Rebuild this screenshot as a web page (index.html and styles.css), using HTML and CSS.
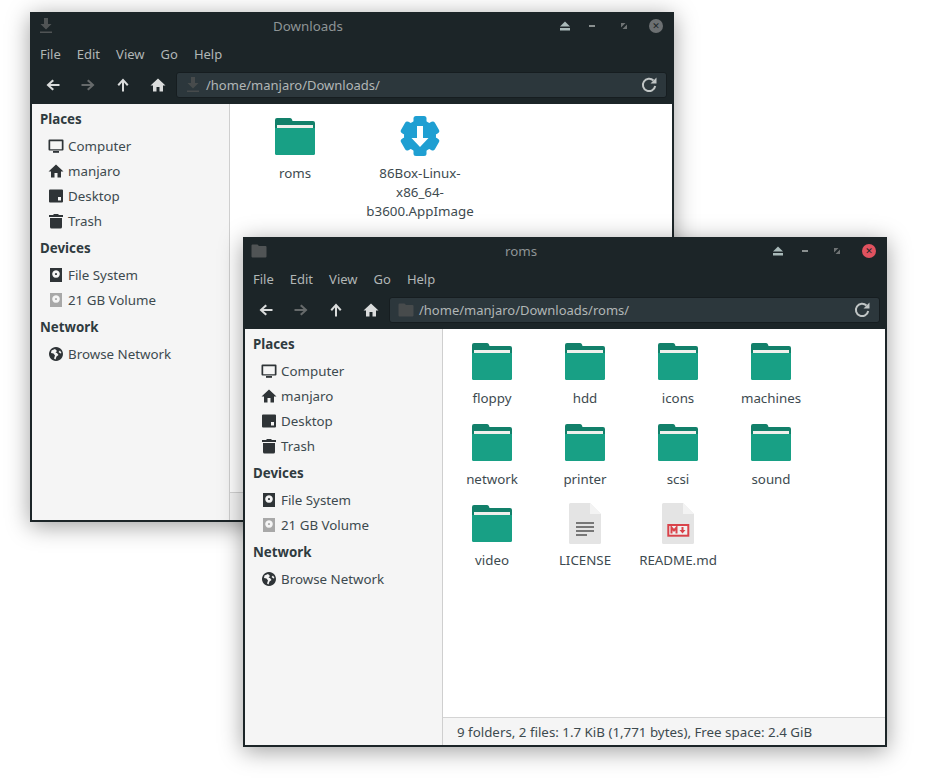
FILE: index.html
```html
<!DOCTYPE html>
<html lang="en">
<head>
<meta charset="utf-8">
<title>File manager windows</title>
<link rel="stylesheet" href="styles.css">
</head>
<body>
<svg class="defs" aria-hidden="true">
  <symbol id="i-download" viewBox="0 0 16 16"><path d="M6 0h4v6h3.500L8 11.500 2.500 6H6z"/><rect x="2" y="13.500" width="12" height="1.500"/></symbol>
  <symbol id="i-folder-small" viewBox="0 0 16 16"><path d="M1.500 1.500h5l1.500 1.500h6.500a1 1 0 0 1 1 1v9.500a1 1 0 0 1-1 1h-13a1 1 0 0 1-1-1v-11a1 1 0 0 1 1-1z"/></symbol>
  <symbol id="i-back" viewBox="0 0 16 16"><path d="M1.500 8 7.500 2.500 9 4 5.500 7H14.500V9H5.500L9 12 7.500 13.500z"/></symbol>
  <symbol id="i-forward" viewBox="0 0 16 16"><path d="M14.500 8 8.500 2.500 7 4 10.500 7H1.500V9H10.500L7 12 8.500 13.500z"/></symbol>
  <symbol id="i-up" viewBox="0 0 16 16"><path d="M8 1.500 13.500 7.500 12 9 9 5.500V14.500H7V5.500L4 9 2.500 7.500z"/></symbol>
  <symbol id="i-home" viewBox="0 0 16 16"><path d="M8 1.500 15.500 8.500H13V14.500H9.500V10H6.500V14.500H3V8.500H.5z"/></symbol>
  <symbol id="i-eject" viewBox="0 0 12 12"><path d="M6 1.500 11 6.500H1z"/><rect x="1" y="8" width="10" height="2.500"/></symbol>
  <symbol id="i-min" viewBox="0 0 12 12"><rect x="3" y="5" width="6" height="2"/></symbol>
  <symbol id="i-max" viewBox="0 0 12 12"><path d="M3 3h4.500L3 7.500zM9 9H4.500L9 4.500z"/></symbol>
  <symbol id="i-reload" viewBox="0 0 18 18"><path d="M13.500 4.500A6.200 6.200 0 1 0 15.200 10" fill="none" stroke="currentColor" stroke-width="2"/><path d="M10.500 7.500 16.500 1.500V7.500z"/></symbol>
  <symbol id="i-computer" viewBox="0 0 16 16"><path fill-rule="evenodd" d="M1.500 1.500h13a1 1 0 0 1 1 1v9a1 1 0 0 1-1 1h-13a1 1 0 0 1-1-1v-9a1 1 0 0 1 1-1zM2.200 3.200v8h11.600v-8z"/><rect x="5" y="13" width="6" height="1.800"/></symbol>
  <symbol id="i-desktop" viewBox="0 0 16 16"><path fill-rule="evenodd" d="M2 1.500h12a1 1 0 0 1 1 1v11a1 1 0 0 1-1 1H2a1 1 0 0 1-1-1v-11a1 1 0 0 1 1-1zM10 9v3.500h3V9z"/></symbol>
  <symbol id="i-trash" viewBox="0 0 16 16"><path d="M5.500 1h5v1H15v2H1V2h4.500zM2 5h12v9a1.500 1.500 0 0 1-1.500 1.500h-9A1.500 1.500 0 0 1 2 14z"/></symbol>
  <symbol id="i-disk" viewBox="0 0 16 16"><path fill-rule="evenodd" d="M2 1h12v14H2zM8 3.200a3.800 3.800 0 1 0 .01 0zM8 5.900a1.100 1.100 0 1 1-.01 0z"/></symbol>
  <symbol id="i-globe" viewBox="0 0 16 16"><path fill-rule="evenodd" d="M8 1a7 7 0 1 1-.01 0zM7 3 3.500 4.500 3 7l2.500.5L7 9.500 6 12.500l1.500 1 1-3 2-1.500L9 7 7.500 6.500 9 5zM12 4.500 10.500 6l2 1.500 1-.5z"/></symbol>
  <symbol id="i-folder" viewBox="0 0 40 40"><path fill="#12806a" d="M2 2h13a2 2 0 0 1 2 1.500l.5 1.500H38a2 2 0 0 1 2 2V20H0V4a2 2 0 0 1 2-2z"/><rect fill="#f0f0ec" x="2" y="9" width="36" height="4"/><path fill="#18a085" d="M0 12h40v25.500a1.500 1.500 0 0 1-1.500 1.500h-37A1.500 1.500 0 0 1 0 37.500z"/></symbol>
  <symbol id="i-appimage" viewBox="0 0 40 40">
    <g fill="#1f9fd2"><circle cx="20" cy="20" r="16"/><rect x="13.500" y="0" width="13" height="40" rx="2.500"/><rect x="13.500" y=".5" width="13" height="39" rx="2.500" transform="rotate(60 20 20)"/><rect x="13.500" y=".5" width="13" height="39" rx="2.500" transform="rotate(120 20 20)"/></g>
    <path fill="#fff" d="M17 10h6v12h5.500L20 31 11.500 22H17z"/>
  </symbol>
  <symbol id="i-doc" viewBox="0 0 32 41"><path fill="#e4e4e4" d="M1.500 0H21L32 11v28.500a1.500 1.500 0 0 1-1.500 1.500h-29A1.500 1.500 0 0 1 0 39.500v-38A1.500 1.500 0 0 1 1.500 0z"/><path fill="#f3f3f3" d="M21 0 32 11H21z"/></symbol>
  <symbol id="i-license" viewBox="0 0 32 41"><use href="#i-doc"/><g fill="#777"><rect x="7" y="19" width="18" height="2"/><rect x="7" y="23" width="18" height="2"/><rect x="7" y="27" width="18" height="2"/><rect x="7" y="31" width="11" height="2"/></g></symbol>
  <symbol id="i-markdown" viewBox="0 0 32 41"><use href="#i-doc"/><rect x="6.300" y="22" width="20" height="10.700" fill="#f0f0f0" stroke="#d9434a" stroke-width="2"/><path d="M9.500 30.500v-6l2.500 3 2.500-3v6" fill="none" stroke="#d9434a" stroke-width="2"/><path d="M19.500 24h2v3h2l-3 3.500-3-3.500h2z" fill="#d9434a"/></symbol>
</svg>

<section class="window window-back">
  <header class="titlebar">
    <div class="title-icon"><svg class="ico16 dim"><use href="#i-download"/></svg></div>
    <div class="title">Downloads</div>
    <div class="controls">
      <button class="ctl ctl-eject"><svg class="ico12"><use href="#i-eject"/></svg></button>
      <button class="ctl ctl-min"><svg class="ico12"><use href="#i-min"/></svg></button>
      <button class="ctl ctl-max"><svg class="ico12"><use href="#i-max"/></svg></button>
      <button class="ctl"><span class="close">&#x2715;</span></button>
    </div>
  </header>
  <nav class="menubar"><span class="menu">File</span><span class="menu">Edit</span><span class="menu">View</span><span class="menu">Go</span><span class="menu">Help</span></nav>
  <div class="toolbar">
    <button class="tool"><svg class="ico16"><use href="#i-back"/></svg></button>
    <button class="tool tool-off"><svg class="ico16"><use href="#i-forward"/></svg></button>
    <button class="tool"><svg class="ico16"><use href="#i-up"/></svg></button>
    <button class="tool"><svg class="ico16"><use href="#i-home"/></svg></button>
    <div class="path"><svg class="ico16 dim"><use href="#i-download"/></svg><span class="path-text">/home/manjaro/Downloads/</span><svg class="ico18"><use href="#i-reload"/></svg></div>
  </div>
  <div class="content">
    <aside class="sidebar">
      <h2 class="heading">Places</h2>
      <div class="row"><svg class="ico16"><use href="#i-computer"/></svg>Computer</div>
      <div class="row"><svg class="ico16"><use href="#i-home"/></svg>manjaro</div>
      <div class="row"><svg class="ico16"><use href="#i-desktop"/></svg>Desktop</div>
      <div class="row"><svg class="ico16"><use href="#i-trash"/></svg>Trash</div>
      <h2 class="heading">Devices</h2>
      <div class="row"><svg class="ico16"><use href="#i-disk"/></svg>File System</div>
      <div class="row"><svg class="ico16 faint"><use href="#i-disk"/></svg>21 GB Volume</div>
      <h2 class="heading">Network</h2>
      <div class="row"><svg class="ico16"><use href="#i-globe"/></svg>Browse Network</div>
    </aside>
    <main class="pane">
      <div class="grid grid-wide">
        <div class="item"><svg class="big"><use href="#i-folder"/></svg><span class="label">roms</span></div>
        <div class="item"><svg class="big"><use href="#i-appimage"/></svg><span class="label">86Box-Linux-x86_64-b3600.AppImage</span></div>
      </div>
      <footer class="status"></footer>
    </main>
  </div>
</section>

<section class="window window-front">
  <header class="titlebar">
    <div class="title-icon"><svg class="ico16 dim"><use href="#i-folder-small"/></svg></div>
    <div class="title">roms</div>
    <div class="controls">
      <button class="ctl ctl-eject"><svg class="ico12"><use href="#i-eject"/></svg></button>
      <button class="ctl ctl-min"><svg class="ico12"><use href="#i-min"/></svg></button>
      <button class="ctl ctl-max"><svg class="ico12"><use href="#i-max"/></svg></button>
      <button class="ctl"><span class="close close-active">&#x2715;</span></button>
    </div>
  </header>
  <nav class="menubar"><span class="menu">File</span><span class="menu">Edit</span><span class="menu">View</span><span class="menu">Go</span><span class="menu">Help</span></nav>
  <div class="toolbar">
    <button class="tool"><svg class="ico16"><use href="#i-back"/></svg></button>
    <button class="tool tool-off"><svg class="ico16"><use href="#i-forward"/></svg></button>
    <button class="tool"><svg class="ico16"><use href="#i-up"/></svg></button>
    <button class="tool"><svg class="ico16"><use href="#i-home"/></svg></button>
    <div class="path"><svg class="ico16 dim"><use href="#i-folder-small"/></svg><span class="path-text">/home/manjaro/Downloads/roms/</span><svg class="ico18"><use href="#i-reload"/></svg></div>
  </div>
  <div class="content">
    <aside class="sidebar">
      <h2 class="heading">Places</h2>
      <div class="row"><svg class="ico16"><use href="#i-computer"/></svg>Computer</div>
      <div class="row"><svg class="ico16"><use href="#i-home"/></svg>manjaro</div>
      <div class="row"><svg class="ico16"><use href="#i-desktop"/></svg>Desktop</div>
      <div class="row"><svg class="ico16"><use href="#i-trash"/></svg>Trash</div>
      <h2 class="heading">Devices</h2>
      <div class="row"><svg class="ico16"><use href="#i-disk"/></svg>File System</div>
      <div class="row"><svg class="ico16 faint"><use href="#i-disk"/></svg>21 GB Volume</div>
      <h2 class="heading">Network</h2>
      <div class="row"><svg class="ico16"><use href="#i-globe"/></svg>Browse Network</div>
    </aside>
    <main class="pane">
      <div class="grid">
        <div class="item"><svg class="big"><use href="#i-folder"/></svg><span class="label">floppy</span></div>
        <div class="item"><svg class="big"><use href="#i-folder"/></svg><span class="label">hdd</span></div>
        <div class="item"><svg class="big"><use href="#i-folder"/></svg><span class="label">icons</span></div>
        <div class="item"><svg class="big"><use href="#i-folder"/></svg><span class="label">machines</span></div>
        <div class="item"><svg class="big"><use href="#i-folder"/></svg><span class="label">network</span></div>
        <div class="item"><svg class="big"><use href="#i-folder"/></svg><span class="label">printer</span></div>
        <div class="item"><svg class="big"><use href="#i-folder"/></svg><span class="label">scsi</span></div>
        <div class="item"><svg class="big"><use href="#i-folder"/></svg><span class="label">sound</span></div>
        <div class="item"><svg class="big"><use href="#i-folder"/></svg><span class="label">video</span></div>
        <div class="item"><svg class="big doc"><use href="#i-license"/></svg><span class="label">LICENSE</span></div>
        <div class="item"><svg class="big doc"><use href="#i-markdown"/></svg><span class="label">README.md</span></div>
      </div>
      <footer class="status">9 folders, 2 files: 1.7 KiB (1,771 bytes), Free space: 2.4 GiB</footer>
    </main>
  </div>
</section>
</body>
</html>
```

FILE: styles.css
```css
* { box-sizing: border-box; }

html, body { margin: 0; height: 100%; }

body {
  position: relative;
  width: 926px;
  height: 779px;
  overflow: hidden;
  background: #fff;
  font-family: "Noto Sans", sans-serif;
  font-size: 13.33px;
  color: #3d4a4f;
}

.defs { position: absolute; width: 0; height: 0; }

svg { display: block; fill: currentColor; flex: none; }
.ico12 { width: 12px; height: 12px; }
.ico16 { width: 16px; height: 16px; }
.ico18 { width: 18px; height: 18px; }
.dim { color: #505455; }
.faint { color: #a8a8a8; }

.window {
  position: absolute;
  display: flex;
  flex-direction: column;
  width: 644px;
  height: 510px;
  border: 2px solid #1c2528;
  background: #1c2528;
  box-shadow: 0 4px 22px rgba(0, 0, 0, .38);
}
.window-back { left: 30px; top: 12px; }
.window-front { left: 243px; top: 237px; }

.titlebar { display: flex; align-items: center; height: 24px; flex: none; }
.title-icon { width: 30px; padding-left: 6px; }
.title { flex: 1; text-align: center; color: #8e9496; font-size: 13.33px; }
.controls { display: flex; width: 118px; }
.ctl {
  display: flex;
  align-items: center;
  justify-content: center;
  width: 32px;
  height: 24px;
  padding: 0;
  border: 0;
  background: none;
}
.ctl-eject { width: 22px; color: #a9bab9; }
.ctl-min { color: #8a9090; }
.ctl-max { color: #6f7374; }
.close {
  display: flex;
  align-items: center;
  justify-content: center;
  width: 14px;
  height: 14px;
  border-radius: 50%;
  background: #6c7072;
  color: #1c2528;
  font: bold 9px "DejaVu Sans", sans-serif;
}
.close-active { background: #e0525f; }

.menubar { display: flex; align-items: center; height: 30px; padding-top: 2px; flex: none; }
.menu { padding: 0 8px; color: #b1b6b6; font-size: 13px; }

.toolbar { display: flex; align-items: flex-start; height: 36px; padding: 4px 5px 0 3px; flex: none; }
.tool {
  display: flex;
  align-items: center;
  justify-content: center;
  width: 35px;
  height: 26px;
  padding: 0;
  border: 0;
  background: none;
  color: #dadcdc;
}
.tool-off { color: #666a6b; }
.path {
  display: flex;
  align-items: center;
  flex: 1;
  height: 26px;
  margin-left: 1px;
  padding: 0 8px;
  background: #2c373c;
  border: 1px solid #161d20;
  border-radius: 3px;
  color: #c0c5c5;
}
.path .dim { color: #474b4c; }
.path-text { flex: 1; margin-left: 5px; color: #b1b6b6; font-size: 13px; }

.content { display: flex; flex: 1; min-height: 0; }

.sidebar {
  width: 198px;
  flex: none;
  background: #f5f5f5;
  border-right: 1px solid #cfcfcf;
}
.heading {
  display: flex;
  align-items: center;
  height: 29px;
  margin: 0;
  padding-left: 8px;
  font-size: 13.33px;
  font-weight: 700;
  color: #2f3b40;
}
.row {
  display: flex;
  align-items: center;
  gap: 4px;
  height: 25px;
  padding-left: 16px;
  color: #3d4a4f;
}
.row svg { color: #2f3437; }
.row svg.faint { color: #a8a8a8; }

.pane { display: flex; flex-direction: column; flex: 1; min-width: 0; background: #fff; }

.grid {
  display: grid;
  grid-template-columns: repeat(4, 93px);
  grid-auto-rows: 81px;
  align-content: start;
  flex: 1;
  padding: 12px 0 0 2.5px;
}
.grid-wide { grid-template-columns: repeat(2, 125px); }

.item { display: flex; flex-direction: column; align-items: center; }
.big { width: 40px; height: 40px; }
.doc { width: 32px; height: 41px; margin-bottom: -1px; }
.label {
  width: 114px;
  margin-top: 8px;
  line-height: 19px;
  text-align: center;
  color: #3d4a4f;
}

.status {
  display: flex;
  align-items: center;
  height: 28px;
  flex: none;
  padding-left: 14px;
  background: #f5f5f5;
  border-top: 1px solid #d4d4d4;
  color: #3d4a4f;
}
```
